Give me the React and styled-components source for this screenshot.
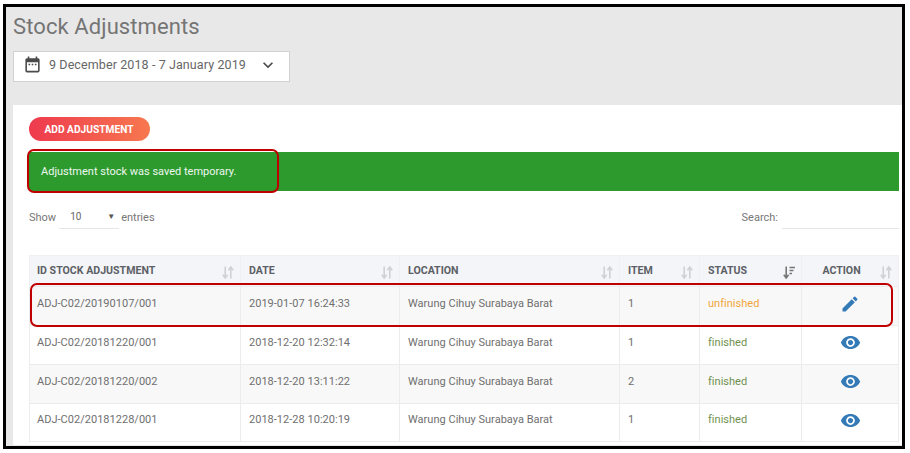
import React from "react";
import styled, { createGlobalStyle } from "styled-components";
import { MdDateRange, MdKeyboardArrowDown, MdEdit, MdVisibility } from "react-icons/md";

const Global = createGlobalStyle`
  html, body { margin: 0; padding: 0; background: #fff; }
  body { font-family: Roboto, "Liberation Sans", sans-serif; }
`;

const Frame = styled.div`
  position: relative;
  box-sizing: border-box;
  width: 902px;
  height: 445px;
  margin: 4px 0 0 3px;
  border: 3px solid #000;
  background: #e8e8e8;
  overflow: hidden;
`;

const Head = styled.div`
  padding: 7px 0 0 7px;
  height: 98px;
  box-sizing: border-box;
`;

const Title = styled.h1`
  margin: 0;
  font-size: 22px;
  line-height: 26px;
  font-weight: 400;
  color: #757575;
  letter-spacing: 0.1px;
`;

const DateBox = styled.div`
  box-sizing: border-box;
  margin-top: 11px;
  width: 277px;
  height: 31px;
  display: flex;
  align-items: center;
  padding: 0 11px 4px 9px;
  background: #fff;
  border: 1px solid #d2d2d2;
  color: #666;
  font-size: 12.5px;
  letter-spacing: 0.1px;
  svg { color: #4a4a4a; flex: none; }
`;

const DateText = styled.span`
  margin-left: 7px;
  flex: 1;
`;

const Panel = styled.div`
  margin-left: 7px;
  background: #fff;
  height: 340px;
  padding: 12px 3px 0 16px;
  box-sizing: border-box;
`;

const AddButton = styled.button`
  display: block;
  width: 121px;
  height: 24px;
  border: 0;
  border-radius: 12px;
  padding: 0 1px 0 0;
  background: linear-gradient(90deg, #ee3a4e, #f7784f);
  color: #fff;
  font-family: inherit;
  font-weight: 700;
  font-size: 10.2px;
`;

const Alert = styled.div`
  margin-top: 11px;
  height: 39px;
  width: 870px;
  box-sizing: border-box;
  padding: 0 12px 1px;
  display: flex;
  align-items: center;
  background: #2d9a2e;
  color: #eef7ee;
  font-size: 11px;
`;

const Controls = styled.div`
  display: flex;
  justify-content: space-between;
  align-items: center;
  height: 32px;
  margin-top: 10px;
  color: #777;
  font-size: 11px;
`;

const Group = styled.div`
  display: flex;
  align-items: center;
`;

const PageSize = styled.div`
  box-sizing: border-box;
  display: flex;
  justify-content: space-between;
  align-items: center;
  width: 60px;
  height: 24px;
  margin: 0 2px 0 3px;
  padding: 0 4px 0 11px;
  border-bottom: 1px solid #e6e6e6;
  font-size: 10px;
  color: #666;
`;

const Caret = styled.span`
  font-size: 8px;
  color: #555;
`;

const SearchInput = styled.div`
  box-sizing: border-box;
  width: 117px;
  height: 24px;
  margin-left: 4px;
  border-bottom: 1px solid #e6e6e6;
`;

const Table = styled.table`
  margin-top: 22px;
  width: 869px;
  table-layout: fixed;
  border-collapse: collapse;
  font-size: 11px;
  color: #6f6f6f;
`;

const Th = styled.th`
  position: relative;
  height: 31px;
  padding: ${(p) => (p.$center ? "0 17px 2px 0" : "0 0 2px 8px")};
  text-align: ${(p) => (p.$center ? "center" : "left")};
  background: #f4f5f8;
  border: 1px solid #f0f0f2;
  border-bottom: 0;
  color: #5c5f66;
  font-size: 10.6px;
  font-weight: 700;
  box-sizing: border-box;
  &:first-child { padding-left: 7px; }
`;

const SortMark = styled.svg`
  position: absolute;
  right: 6px;
  top: 10px;
`;

const Row = styled.tr`
  height: 39px;
  background: ${(p) => (p.$odd ? "#f8f8f8" : "#fff")};
  &:last-child { height: 38px; }
`;

const Td = styled.td`
  padding: ${(p) => (p.$center ? "0" : "0 0 6px 8px")};
  border: 1px solid #ececec;
  text-align: ${(p) => (p.$center ? "center" : "left")};
  color: ${(p) => p.$color || "#6f6f6f"};
  letter-spacing: 0.02px;
  &:first-child { padding-left: 7px; }
  svg { display: block; margin: 0 auto 5px; color: #337ab7; }
`;

const Callout = styled.div`
  position: absolute;
  box-sizing: border-box;
  left: ${(p) => p.$x}px;
  top: ${(p) => p.$y}px;
  width: ${(p) => p.$w}px;
  height: ${(p) => p.$h}px;
  border: 2px solid #c00000;
  border-radius: 7px;
  pointer-events: none;
`;

const Sort = ({ active }) => (
  <SortMark width="12" height="13" viewBox="0 0 12 13" fill="none" stroke={active ? "#777" : "#cfd1d4"} strokeWidth="1.6">
    <path d="M3.2 0.5V11.5M0.8 8.8L3.2 12L5.6 8.8" />
    {active ? (
      <path d="M6.5 1.5H12M6.5 4.5H10.5M6.5 7.5H9" />
    ) : (
      <path d="M8.8 12.5V1.5M6.4 4.2L8.8 1L11.2 4.2" />
    )}
  </SortMark>
);

const rows = [
  ["ADJ-C02/20190107/001", "2019-01-07 16:24:33", "1", "unfinished"],
  ["ADJ-C02/20181220/001", "2018-12-20 12:32:14", "1", "finished"],
  ["ADJ-C02/20181220/002", "2018-12-20 13:11:22", "2", "finished"],
  ["ADJ-C02/20181228/001", "2018-12-28 10:20:19", "1", "finished"],
];

const App = () => (
  <>
    <Global />
    <Frame>
      <Head>
        <Title>Stock Adjustments</Title>
        <DateBox>
          <MdDateRange size={19} />
          <DateText>9 December 2018 - 7 January 2019</DateText>
          <MdKeyboardArrowDown size={20} />
        </DateBox>
      </Head>
      <Panel>
        <AddButton>ADD ADJUSTMENT</AddButton>
        <Alert>Adjustment stock was saved temporary.</Alert>
        <Controls>
          <Group>
            Show
            <PageSize>10<Caret>▼</Caret></PageSize>
            entries
          </Group>
          <Group>
            Search:
            <SearchInput />
          </Group>
        </Controls>
        <Table>
          <colgroup>
            <col width="211" />
            <col width="159" />
            <col width="220" />
            <col width="80" />
            <col width="102" />
            <col width="97" />
          </colgroup>
          <thead>
            <tr>
              <Th>ID STOCK ADJUSTMENT<Sort /></Th>
              <Th>DATE<Sort /></Th>
              <Th>LOCATION<Sort /></Th>
              <Th>ITEM<Sort /></Th>
              <Th>STATUS<Sort active /></Th>
              <Th $center>ACTION<Sort /></Th>
            </tr>
          </thead>
          <tbody>
            {rows.map((r, i) => (
              <Row key={r[0]} $odd={i % 2 === 0}>
                <Td>{r[0]}</Td>
                <Td>{r[1]}</Td>
                <Td>Warung Cihuy Surabaya Barat</Td>
                <Td>{r[2]}</Td>
                <Td $color={r[3] === "finished" ? "#6f9150" : "#f0a63a"}>{r[3]}</Td>
                <Td $center>{r[3] === "finished" ? <MdVisibility size={21} /> : <MdEdit size={20} />}</Td>
              </Row>
            ))}
          </tbody>
        </Table>
      </Panel>
      <Callout $x={21} $y={142} $w={252} $h={44} />
      <Callout $x={24} $y={276} $w={863} $h={44} />
    </Frame>
  </>
);

export default App;
